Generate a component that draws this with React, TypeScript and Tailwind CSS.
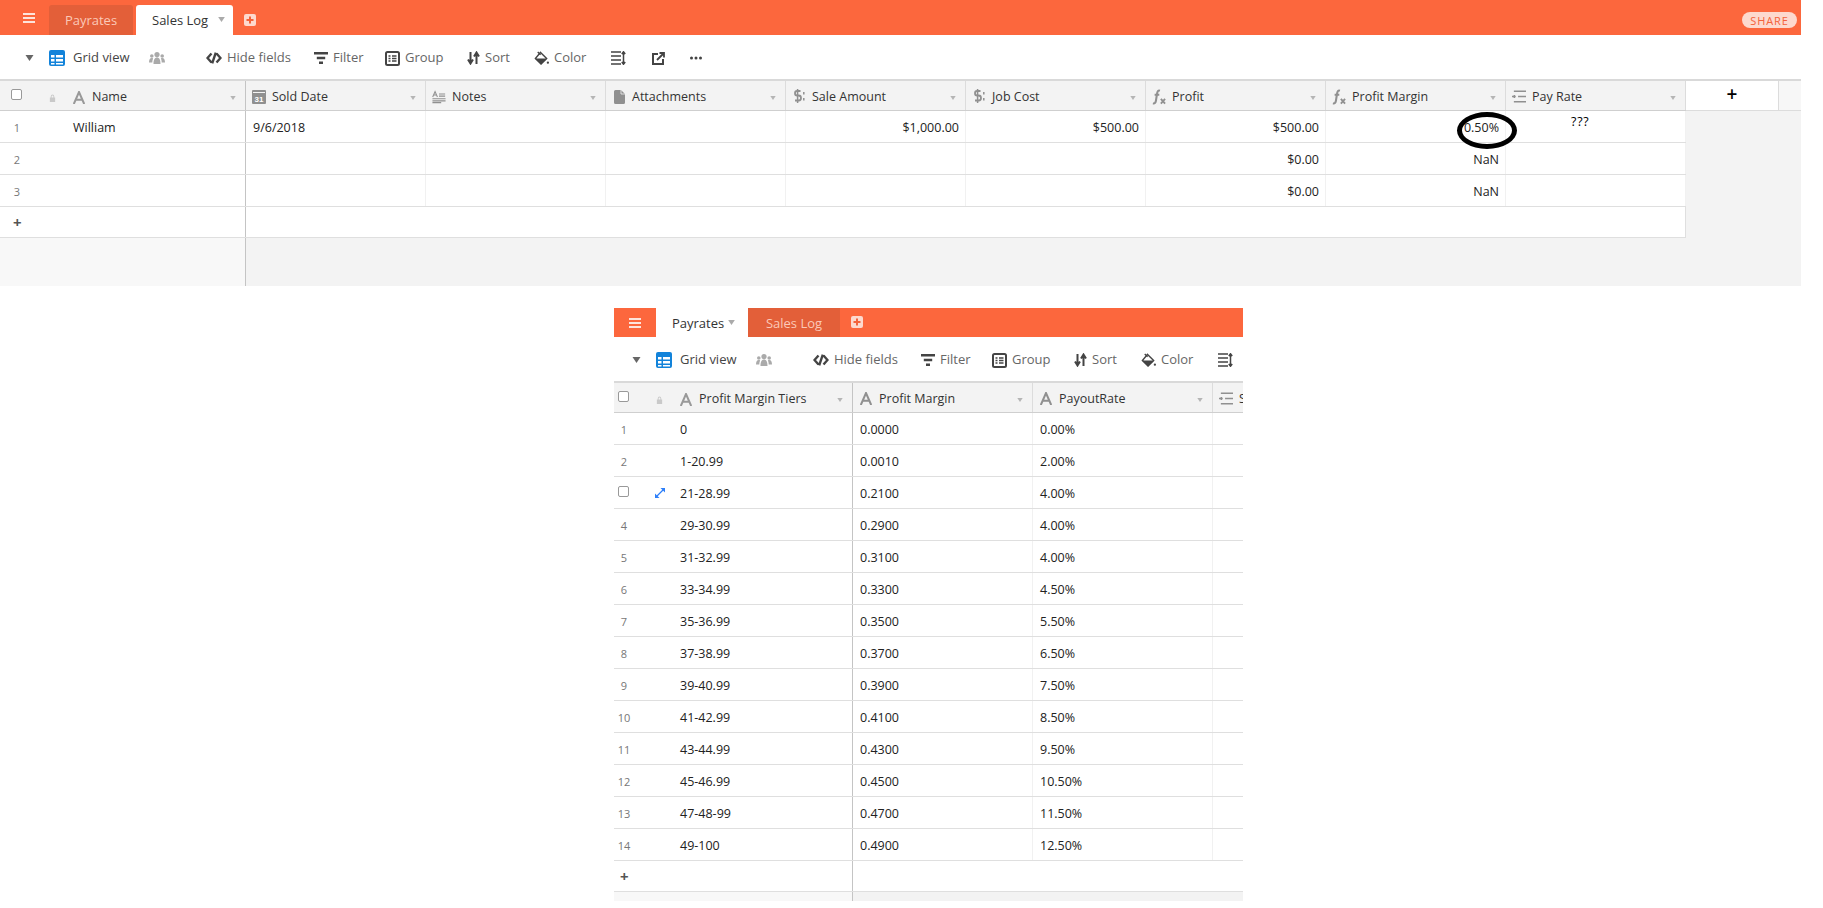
import type { ReactNode } from 'react';

const Caret = ({ className }: { className: string }) => (
  <svg viewBox="0 0 8 6" className={className}><path d="M0 0h8L4 6z" fill="currentColor" /></svg>
);

const MenuIcon = () => (
  <svg viewBox="0 0 12 10" className="w-[12px] h-[10px] text-[#fde4dc]">
    <path d="M0 0h12v2H0zM0 4h12v2H0zM0 8h12v2H0z" fill="currentColor" />
  </svg>
);

const PlusBox = () => (
  <svg viewBox="0 0 12 12" className="w-[12px] h-[12px]">
    <rect width="12" height="12" rx="2" fill="#fdd9ce" />
    <path d="M5 2.500h2V5h2.500v2H7v2.500H5V7H2.500V5H5z" fill="#f4623a" />
  </svg>
);

const GridIcon = () => (
  <svg viewBox="0 0 16 16" className="w-[16px] h-[16px]">
    <rect width="16" height="16" rx="2" fill="#1283da" />
    <path d="M2 5h3.500v2.500H2zM7 5h7v2.500H7zM2 9h3.500v2.500H2zM7 9h7v2.500H7zM2 13h3.500v1.500H2zM7 13h7v1.500H7z" fill="#fff" />
  </svg>
);

const PeopleIcon = () => (
  <svg viewBox="0 0 16 14" className="w-[16px] h-[14px] text-[#aaa]">
    <g fill="currentColor">
      <circle cx="8" cy="3.600" r="2.600" /><circle cx="2.800" cy="5" r="1.800" /><circle cx="13.200" cy="5" r="1.800" />
      <path d="M4.500 13c0-4 1-6.500 3.500-6.500s3.500 2.500 3.500 6.500zM0 11.500c0-2.500.8-4.500 2.800-4.500.6 0 1 .2 1.300.4C3.500 8.500 3.300 10 3.300 11.500zM16 11.500c0-2.500-.8-4.500-2.800-4.500-.6 0-1 .2-1.300.4.6 1.100.8 2.600.8 4.100z" />
    </g>
  </svg>
);

const HideIcon = () => (
  <svg viewBox="0 0 16 12" className="w-[16px] h-[12px] text-[#444]" fill="none" stroke="currentColor" strokeWidth="2.400">
    <path d="M5.500 1.500 1.500 6l4 4.500M10.500 1.500l4 4.500-4 4.500M9.800.6 6.200 11.400" />
  </svg>
);

const FilterIcon = () => (
  <svg viewBox="0 0 14 12" className="w-[14px] h-[12px] text-[#444]">
    <path d="M0 0h14v2.400H0zM2.800 4.800h8.400v2.400H2.800zM5 9.600h4V12H5z" fill="currentColor" />
  </svg>
);

const GroupIcon = () => (
  <svg viewBox="0 0 15 15" className="w-[15px] h-[15px] text-[#444]" fill="none" stroke="currentColor">
    <rect x="1" y="1" width="13" height="13" rx="1.500" strokeWidth="2" />
    <path d="M3.500 5h2M7 5h4.500M3.500 7.500h2M7 7.500h4.500M3.500 10h2M7 10h4.500" strokeWidth="1.300" />
  </svg>
);

const SortIcon = () => (
  <svg viewBox="0 0 13 14" className="w-[13px] h-[14px] text-[#444]" fill="none" stroke="currentColor" strokeWidth="2">
    <path d="M3.500 1v11M1 8.500l2.500 4L6 8.500M9.500 13V2M7 5.500l2.500-4 2.500 4" />
  </svg>
);

const ColorIcon = () => (
  <svg viewBox="0 0 16 16" className="w-[15px] h-[15px] text-[#444]">
    <path d="M7 1.500 13.500 8 7.500 14 1.500 8z" fill="none" stroke="currentColor" strokeWidth="1.500" />
    <path d="M1 8h13l-6.500 6.500z" fill="currentColor" />
    <path d="M4 1l3 3" stroke="currentColor" strokeWidth="1.500" />
    <circle cx="14.800" cy="12.500" r="1.200" fill="currentColor" />
  </svg>
);

const RowHeightIcon = () => (
  <svg viewBox="0 0 15 14" className="w-[15px] h-[14px] text-[#444]" fill="none" stroke="currentColor" strokeWidth="1.500">
    <path d="M0 1h10M0 5h10M0 9h10M0 13h10M12.500 1v12M10.800 3l1.700-2.200L14.200 3M10.800 11l1.700 2.200 1.700-2.200" />
  </svg>
);

const ShareIcon = () => (
  <svg viewBox="0 0 13 13" className="w-[13px] h-[13px] text-[#444]" fill="none" stroke="currentColor" strokeWidth="2">
    <path d="M6 2H1v10h10V7" />
    <path d="M5 8 11 2M7.500 1H12v4.500" strokeWidth="1.800" />
  </svg>
);

const DotsIcon = () => (
  <svg viewBox="0 0 12 4" className="w-[12px] h-[4px] text-[#444]">
    <g fill="currentColor"><circle cx="1.500" cy="2" r="1.500" /><circle cx="6" cy="2" r="1.500" /><circle cx="10.500" cy="2" r="1.500" /></g>
  </svg>
);

const LockIcon = () => (
  <svg viewBox="0 0 8 9" className="w-[7px] h-[8px] text-[#c9c9c9]">
    <path d="M1 4h6v5H1zM2 4V2.500a2 2 0 0 1 4 0V4H5V2.500a1 1 0 0 0-2 0V4z" fill="currentColor" />
  </svg>
);

const ExpandIcon = () => (
  <svg viewBox="0 0 10 10" className="w-[10px] h-[10px] text-[#2d7ff9]">
    <path d="M2 8l6-6" stroke="currentColor" strokeWidth="1.300" />
    <path d="M5.500 0H10v4.500zM0 5.500V10h4.500z" fill="currentColor" />
  </svg>
);

const TextIcon = () => (
  <svg viewBox="0 0 12 13" className="w-[12px] h-[13px]" fill="none" stroke="currentColor" strokeWidth="2">
    <path d="M.8 13 6 1l5.200 12M2.800 8.800h6.400" />
  </svg>
);

const CalendarIcon = () => (
  <svg viewBox="0 0 14 14" className="w-[14px] h-[14px]">
    <rect width="14" height="14" rx="1" fill="currentColor" />
    <path d="M1 2h12v1H1z" fill="#f3f3f3" />
    <text x="7" y="12" textAnchor="middle" fontSize="8" fontWeight="700" fill="#fff" fontFamily="Liberation Sans, sans-serif">31</text>
  </svg>
);

const NotesIcon = () => (
  <svg viewBox="0 0 16 14" className="w-[15px] h-[14px]" fill="none" stroke="currentColor" strokeWidth="1.200">
    <path d="M.8 7 3.500.8 6.200 7M1.800 4.800h3.400M8 3.500h7M8 6h7" />
    <path d="M.5 9h15M.5 11.300h15M.5 13.500h10" strokeWidth="1.400" />
  </svg>
);

const FileIcon = () => (
  <svg viewBox="0 0 11 14" className="w-[11px] h-[14px]">
    <path d="M1.500 0H7l4 4v8.500a1.500 1.500 0 0 1-1.500 1.500h-8A1.500 1.500 0 0 1 0 12.500v-11A1.500 1.500 0 0 1 1.500 0z" fill="currentColor" />
    <path d="M7 0v4h4" fill="none" stroke="#f3f3f3" strokeWidth=".8" />
  </svg>
);

const DollarIcon = () => (
  <svg viewBox="0 0 11 15" className="w-[11px] h-[15px]" fill="none" stroke="currentColor" strokeWidth="1.800">
    <path d="M6.500 2H3.200C1.800 2 1 3 1 4.200S1.800 6.500 3.200 6.500h1.500C6 6.500 7 7.500 7 9s-1 2.500-2.300 2.500H1" />
    <path d="M3.600 0v14M9.800 3v2.500M9.800 9v2.500" strokeWidth="1.500" />
  </svg>
);

const FxIcon = () => (
  <svg viewBox="0 0 15 16" className="w-[15px] h-[16px]" fill="none" stroke="currentColor">
    <path d="M8.500 1.200C6.500.6 5.800 2 5.400 4.500L4.200 12C3.800 14.500 2.800 15.300 1 14.800M2.800 5.500h5" strokeWidth="2.200" />
    <path d="M9.500 10l4.500 5M14 10l-4.500 5" strokeWidth="2" />
  </svg>
);

const SelectIcon = () => (
  <svg viewBox="0 0 15 13" className="w-[15px] h-[13px]" fill="none" stroke="currentColor" strokeWidth="1.600">
    <path d="M2 1h13M0 6.500h4M6.500 6.500H15M2 12h13M2.500 4.800v3.400" />
  </svg>
);

type Col = { icon: ReactNode; label: string; right?: boolean };

const Checkbox = () => <div className="w-[11px] h-[11px] rounded-[2px] border border-[#999] bg-white" />;

function Toolbar() {
  const items = [
    { w: 'w-[108px]', icon: <HideIcon />, label: 'Hide fields' },
    { w: 'w-[71px]', icon: <FilterIcon />, label: 'Filter' },
    { w: 'w-[82px]', icon: <GroupIcon />, label: 'Group' },
    { w: 'w-[67px]', icon: <SortIcon />, label: 'Sort' },
    { w: 'w-[77px]', icon: <ColorIcon />, label: 'Color' },
    { w: 'w-[41px]', icon: <RowHeightIcon /> },
    { w: 'w-[38px]', icon: <ShareIcon /> },
    { w: 'w-[14px]', icon: <DotsIcon /> },
  ];
  return (
    <div className="flex items-center h-[44px] w-[1801px] bg-white pl-[25px] pt-[2px] text-[13px] text-[#666]">
      <Caret className="w-[9px] h-[6px] mr-[15px] text-[#666]" />
      <GridIcon />
      <span className="ml-[8px] w-[76px] text-[#444] font-medium">Grid view</span>
      <PeopleIcon />
      <div className="w-[41px] shrink-0" />
      {items.map((it, i) => (
        <div key={i} className={`${it.w} shrink-0 flex items-center gap-[5px]`}>
          {it.icon}
          {it.label && <span>{it.label}</span>}
        </div>
      ))}
    </div>
  );
}

function Table({ cols, rows, firstIcon, firstLabel, hover, width }: {
  cols: Col[]; rows: string[][]; firstIcon: ReactNode; firstLabel: string; hover?: number; width: string;
}) {
  return (
    <div className={`${width} bg-[#f3f3f3] border-t-2 border-[#d9d9d9]`}>
      <div className="flex h-[30px] w-fit border-b border-[#cfcfcf] bg-[#f3f3f3] text-[#333]">
        <div className="w-[246px] shrink-0 flex items-center border-r border-[#c4c4c4] pr-[9px] pt-[4px]">
          <div className="w-[32px] pl-[1px] flex justify-center -mt-[6px]"><Checkbox /></div>
          <div className="w-[41px] flex justify-center"><LockIcon /></div>
          <div className="text-[#999] -mt-[1px]">{firstIcon}</div>
          <span className="ml-[7px] flex-1">{firstLabel}</span>
          <Caret className="w-[6px] h-[4px] text-[#b5b5b5]" />
        </div>
        {cols.map(c => (
          <div key={c.label} className="w-[180px] shrink-0 flex items-center border-r border-[#dcdcdc] pl-[6px] pr-[9px] pt-[4px]">
            <div className="w-[14px] flex justify-center text-[#909090] -mt-[2px]">{c.icon}</div>
            <span className="ml-[6px] flex-1 whitespace-nowrap">{c.label}</span>
            <Caret className="w-[6px] h-[4px] text-[#b5b5b5]" />
          </div>
        ))}
      </div>
      {rows.map((r, i) => (
        <div key={i} className="flex h-[32px] w-fit bg-white border-b border-[#dfdfdf] text-[#222]">
          <div className="w-[246px] shrink-0 flex items-center border-r border-[#c4c4c4] pt-[4px]">
            {hover === i ? (
              <>
                <div className="w-[32px] pl-[1px] flex justify-center -mt-[6px]"><Checkbox /></div>
                <div className="w-[41px] flex justify-center -mt-[4px]"><ExpandIcon /></div>
              </>
            ) : (
              <>
                <div className="w-[34px] text-center text-[11px] text-[#777]">{i + 1}</div>
                <div className="w-[39px]" />
              </>
            )}
            <span>{r[0]}</span>
          </div>
          {cols.map((c, j) => (
            <div key={c.label} className={`w-[180px] shrink-0 flex items-center border-r border-[#f1f1f1] pt-[4px] ${c.right ? 'justify-end pr-[6px]' : 'pl-[7px]'}`}>
              {r[j + 1]}
            </div>
          ))}
        </div>
      ))}
      <div className="flex h-[31px] w-fit bg-white border-b border-[#dfdfdf]">
        <div className="w-[246px] shrink-0 flex items-center border-r border-[#c4c4c4] pl-[13px]">
          <span className="text-[15px] font-bold text-[#555] leading-none">+</span>
        </div>
        <div style={{ width: cols.length * 180 }} className="border-r border-[#dfdfdf]" />
      </div>
    </div>
  );
}

function SalesLog() {
  const cols: Col[] = [
    { icon: <CalendarIcon />, label: 'Sold Date' },
    { icon: <NotesIcon />, label: 'Notes' },
    { icon: <FileIcon />, label: 'Attachments' },
    { icon: <DollarIcon />, label: 'Sale Amount', right: true },
    { icon: <DollarIcon />, label: 'Job Cost', right: true },
    { icon: <FxIcon />, label: 'Profit', right: true },
    { icon: <FxIcon />, label: 'Profit Margin', right: true },
    { icon: <SelectIcon />, label: 'Pay Rate' },
  ];
  const rows = [
    ['William', '9/6/2018', '', '', '$1,000.00', '$500.00', '$500.00', '0.50%', ''],
    ['', '', '', '', '', '', '$0.00', 'NaN', ''],
    ['', '', '', '', '', '', '$0.00', 'NaN', ''],
  ];
  return (
    <div className="relative w-[1801px]">
      <div className="flex items-end h-[35px] bg-[#fc673d] text-[13px]">
        <div className="w-[49px] h-full flex items-center pl-[23px]"><MenuIcon /></div>
        <div className="w-[84px] h-[30px] mr-[3px] pt-[2px] rounded-t-[3px] bg-[#e35f39] text-[#fbc9b8] flex items-center justify-center">Payrates</div>
        <div className="w-[97px] h-[30px] pt-[2px] rounded-t-[3px] bg-white text-[#333] flex items-center pl-[16px]">
          <span className="w-[66px]">Sales Log</span>
          <Caret className="w-[7px] h-[5px] text-[#aaa] -mt-[3px]" />
        </div>
        <div className="h-full flex items-center ml-[11px] pt-[5px]"><PlusBox /></div>
        <div className="flex-1" />
        <div className="h-full flex items-center pr-[4px] pt-[5px]">
          <div className="h-[16px] w-[55px] rounded-full bg-[#fdd9ce] text-[#f4623a] text-[11px] tracking-[0.08em] flex items-center justify-center leading-none">SHARE</div>
        </div>
      </div>
      <Toolbar />
      <div className="relative">
        <Table cols={cols} rows={rows} firstIcon={<TextIcon />} firstLabel="Name" width="w-[1801px]" />
        <div className="absolute left-[1686px] top-[2px] h-[30px] w-[93px] bg-white border-r border-b border-[#dcdcdc] flex items-center justify-center pb-[3px] text-[19px] font-semibold text-black leading-none">+</div>
        <div className="absolute left-[1779px] top-[2px] h-[30px] w-[22px] bg-[#f7f7f7] border-b border-[#dcdcdc]" />
      </div>
      <div className="flex h-[48px]">
        <div className="w-[246px] bg-[#f8f8f8] border-r border-[#c4c4c4]" />
        <div className="flex-1 bg-[#f3f3f3]" />
      </div>
      <div className="absolute left-[1571px] top-[113px] text-black tracking-[0.06em]">???</div>
      <div className="absolute left-[1457px] top-[112px] w-[60px] h-[37px] rounded-[50%] border-[5px] border-black" />
    </div>
  );
}

function Payrates() {
  const cols: Col[] = [
    { icon: <TextIcon />, label: 'Profit Margin' },
    { icon: <TextIcon />, label: 'PayoutRate' },
    { icon: <SelectIcon />, label: 'S' },
  ];
  const data = [
    ['0', '0.0000', '0.00%'], ['1-20.99', '0.0010', '2.00%'], ['21-28.99', '0.2100', '4.00%'], ['29-30.99', '0.2900', '4.00%'],
    ['31-32.99', '0.3100', '4.00%'], ['33-34.99', '0.3300', '4.50%'], ['35-36.99', '0.3500', '5.50%'], ['37-38.99', '0.3700', '6.50%'],
    ['39-40.99', '0.3900', '7.50%'], ['41-42.99', '0.4100', '8.50%'], ['43-44.99', '0.4300', '9.50%'], ['45-46.99', '0.4500', '10.50%'],
    ['47-48-99', '0.4700', '11.50%'], ['49-100', '0.4900', '12.50%'],
  ];
  const rows = data.map(r => [...r, '']);
  return (
    <div className="w-[629px] h-[593px] ml-[614px] mt-[22px] overflow-hidden">
      <div className="flex items-end h-[29px] bg-[#fc673d] text-[13px]">
        <div className="w-[42px] h-full flex items-center justify-center"><MenuIcon /></div>
        <div className="w-[92px] h-full pt-[3px] bg-white text-[#333] flex items-center pl-[16px]">
          <span className="w-[56px]">Payrates</span>
          <Caret className="w-[7px] h-[5px] text-[#aaa] -mt-[3px]" />
        </div>
        <div className="w-[92px] h-full pt-[3px] bg-[#e35f39] text-[#fbc9b8] flex items-center justify-center">Sales Log</div>
        <div className="h-full flex items-center ml-[11px] pb-[1px]"><PlusBox /></div>
      </div>
      <div className="-ml-[7px] w-[1801px]">
        <Toolbar />
        <Table cols={cols} rows={rows} firstIcon={<TextIcon />} firstLabel="Profit Margin Tiers" hover={2} width="w-[1801px]" />
        <div className="flex h-[10px]">
          <div className="w-[246px] bg-[#f8f8f8] border-r border-[#c4c4c4]" />
          <div className="flex-1 bg-[#f3f3f3]" />
        </div>
      </div>
    </div>
  );
}

export default function App() {
  return (
    <div className="w-[1823px] h-[908px] overflow-hidden bg-white font-['Open_Sans','Noto_Sans',sans-serif] text-[12.5px]">
      <SalesLog />
      <Payrates />
    </div>
  );
}
